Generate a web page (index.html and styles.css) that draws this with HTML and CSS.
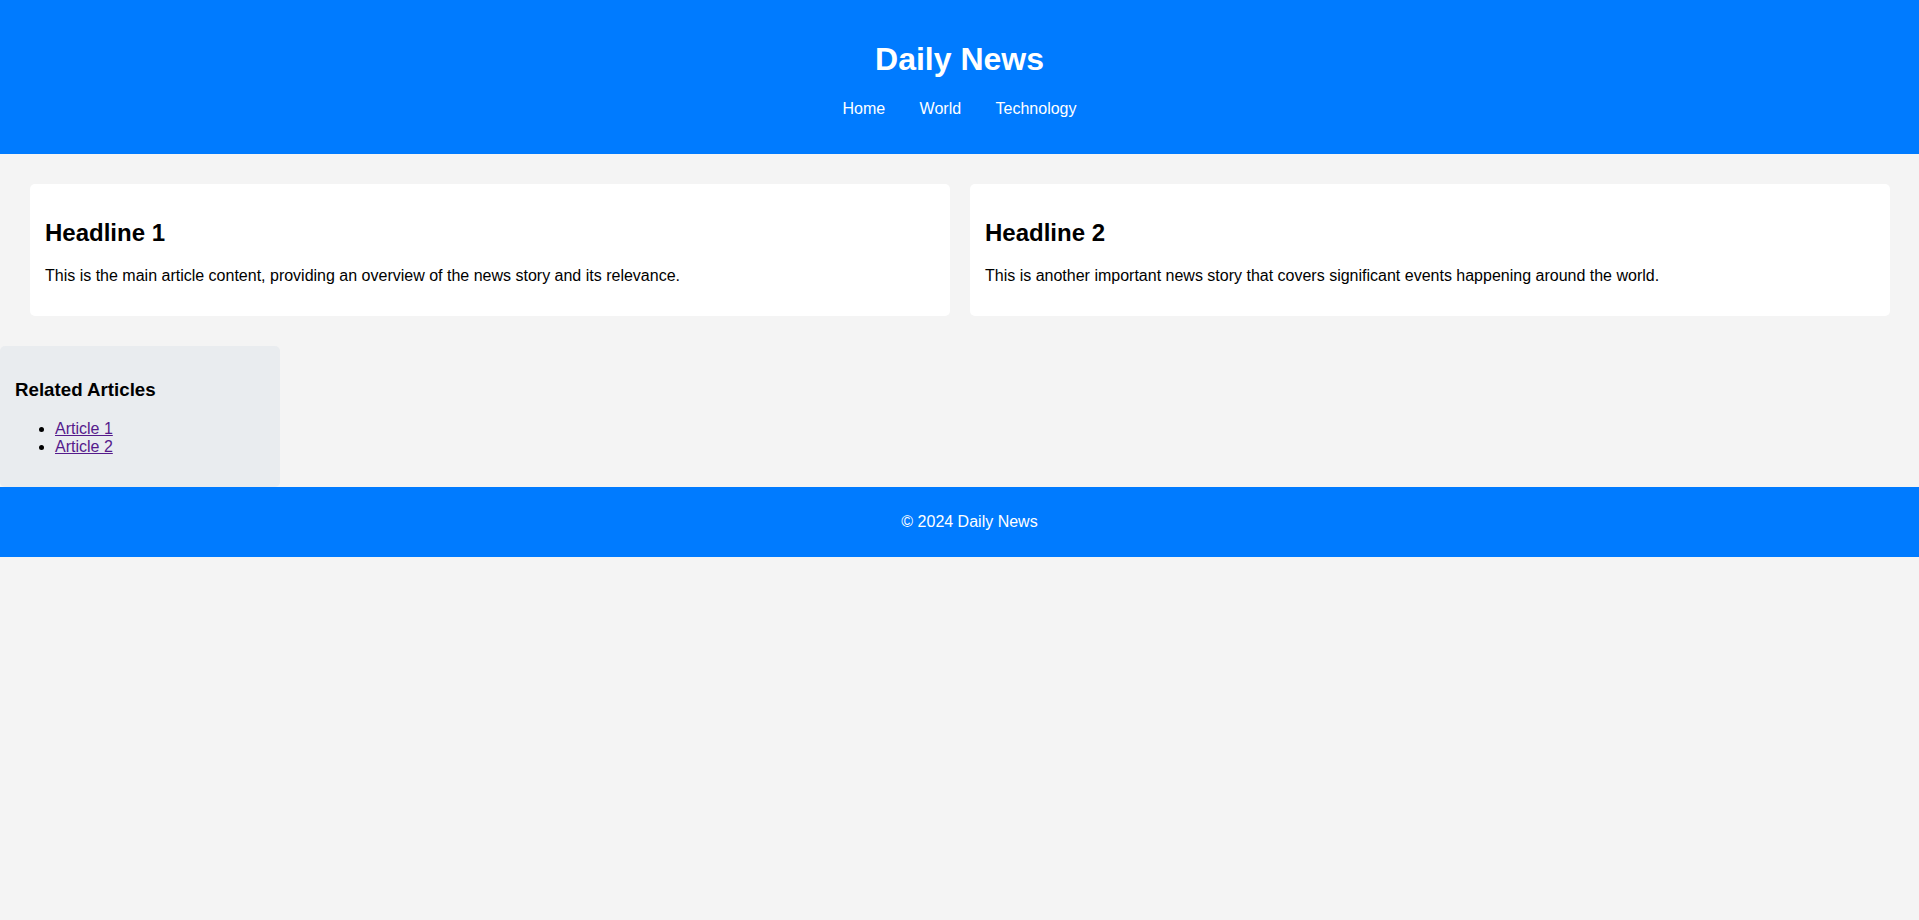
FILE: index.html
```html
<!DOCTYPE html>
<html lang="en">
<head>
<meta charset="utf-8">
<title>Daily News</title>
<link rel="stylesheet" href="styles.css">
</head>
<body>
<header class="site-header">
  <h1 class="site-title">Daily News</h1>
  <nav class="site-nav">
    <a href="#" class="nav-link">Home</a>
    <a href="#" class="nav-link">World</a>
    <a href="#" class="nav-link">Technology</a>
  </nav>
</header>
<main class="main">
  <article class="card">
    <h2 class="card-title">Headline 1</h2>
    <p class="card-text">This is the main article content, providing an overview of the news story and its relevance.</p>
  </article>
  <article class="card">
    <h2 class="card-title">Headline 2</h2>
    <p class="card-text">This is another important news story that covers significant events happening around the world.</p>
  </article>
</main>
<aside class="sidebar">
  <h3 class="sidebar-title">Related Articles</h3>
  <ul class="related-list">
    <li><a href="#" class="related-link">Article 1</a></li>
    <li><a href="#" class="related-link">Article 2</a></li>
  </ul>
</aside>
<footer class="site-footer">
  <p class="footer-text">&copy; 2024 Daily News</p>
</footer>
</body>
</html>
```
FILE: styles.css
```css
html, body {
  margin: 0;
  padding: 0;
}
body {
  background: #f4f4f4;
  font-family: "Liberation Sans", Arial, sans-serif;
  color: #000;
}
.site-header {
  background: #007bff;
  color: #fff;
  text-align: center;
  padding: 20px 0;
}
.site-title {
  font-size: 32px;
  margin: 21.44px 0;
}
.site-nav {
  margin: 16px 0;
  font-size: 16px;
}
.nav-link {
  color: #fff;
  text-decoration: none;
  margin: 0 15px;
}
.main {
  display: grid;
  grid-template-columns: 1fr 1fr;
  gap: 20px;
  padding: 30px 29px 30px 30px;
}
.card {
  background: #fff;
  border-radius: 5px;
  padding: 15px;
}
.card-title {
  font-size: 24px;
  margin: 19.92px 0;
}
.card-text {
  font-size: 16px;
  margin: 16px 0;
}
.sidebar {
  width: 250px;
  padding: 15px;
  background: #e9ecef;
  border-radius: 5px;
}
.sidebar-title {
  font-size: 18.72px;
  margin: 18.72px 0;
}
.related-list {
  margin: 16px 0;
  padding-left: 40px;
}
.related-link {
  color: #551a8b;
}
.site-footer {
  background: #007bff;
  color: #fff;
  text-align: center;
  padding: 26px 0 26px 20px;
}
.footer-text {
  margin: 0;
  line-height: 18px;
}
```
